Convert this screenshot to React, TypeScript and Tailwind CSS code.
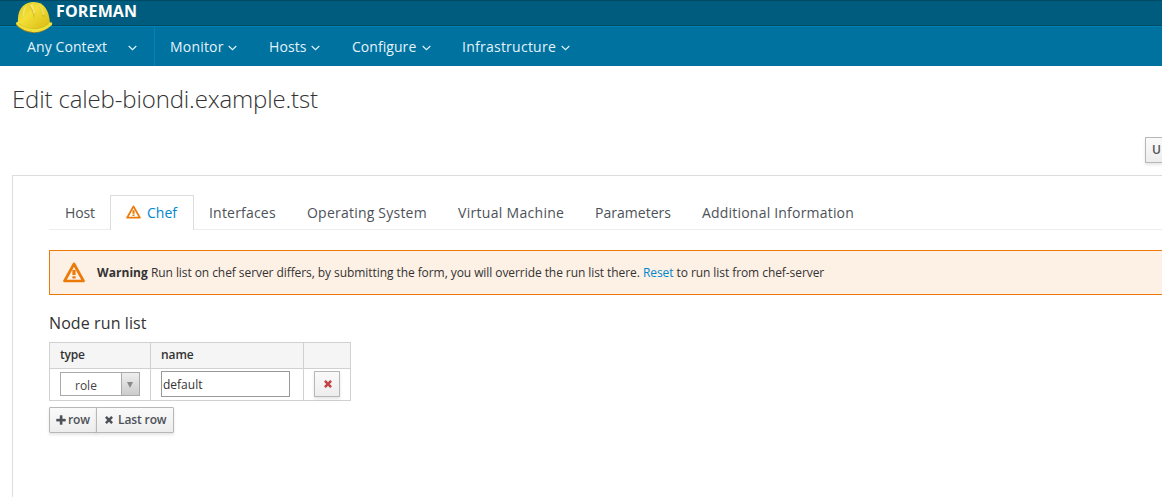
import React from "react";

function AngleDown() {
  return (
    <svg className="mt-[3px] block h-[6px] w-[10px]" viewBox="0 0 10 6" fill="none" stroke="#e3f3fa" strokeWidth="1.15">
      <path d="M.7 1 L4.5 4.7 L8.3 1" />
    </svg>
  );
}

function Warning({ className }: { className: string }) {
  return (
    <svg className={className} viewBox="0 0 22 21" fill="none">
      <path d="M11 2 L20.5 19 H1.5 Z" stroke="#ec7a08" strokeWidth="2.7" strokeLinejoin="round" />
      <path d="M9.4 8h3.2v5H9.4zM9.4 14.3h3.2v2.2H9.4z" fill="#ec7a08" />
    </svg>
  );
}

function Cross({ className }: { className: string }) {
  return (
    <svg className={className} viewBox="0 0 9 9" fill="none" stroke="currentColor" strokeWidth="2.9">
      <path d="M1 1 L8 8 M8 1 L1 8" />
    </svg>
  );
}

function Helmet() {
  return (
    <svg className="absolute left-[15px] top-[1px] h-[33px] w-[38px]" viewBox="0 0 38 33">
      <defs>
        <linearGradient id="dome" x1="0" y1="0" x2="1" y2="1">
          <stop offset="0" stopColor="#d9c426" />
          <stop offset=".4" stopColor="#f3df37" />
          <stop offset="1" stopColor="#d5b710" />
        </linearGradient>
      </defs>
      <path d="M1 24 Q2 22 3 22 L34 22 Q38 21 36.5 24 Q29 32 19 32 Q7 31 1 24Z" fill="#9d8422" />
      <path d="M3 22 C2 10 7 2 17 1 C29 0 34 9 35 22 C30 27 25 29 18 29 C11 29 6 27 3 22Z" fill="url(#dome)" />
      <path d="M1 23 Q1 20 4 21 Q9 26 19 27.5 Q28 28 34 22 Q38 20 37 24 Q29 31 19 31.2 Q7 30 1 23Z" fill="#efe03c" />
      <path d="M4 22.5 Q10 27.5 19 27.5 Q28 27.5 34 22.5" fill="none" stroke="#cdb21c" strokeWidth=".6" />
      <path d="M14 5 Q16 3 18 3.5 L20 11 Q20 16 18.5 17 Q18 10 14 5Z" fill="#d6bd24" />
      <path d="M14.5 4 L18 3 L20 11 L19 14 Q18 8 14.5 4Z" fill="#f4e670" />
      <path d="M23 4 Q27 6 29.5 15 Q29 17 27.5 15 Q26 8 23 4Z" fill="#d2b81f" />
      <path d="M23 3.5 Q27 6 29.5 13 L28 14.5 Q26 8 23 3.5Z" fill="#f0e063" />
      <path d="M8 10 Q9 6 12 4 Q10 9 9 15 Q7 15 8 10Z" fill="#f2e35f" />
    </svg>
  );
}

const menu = [
  { label: "Monitor", box: "w-[99px]", text: "w-[58px] tracking-[0.2px]" },
  { label: "Hosts", box: "w-[83px]", text: "w-[42px] tracking-[0.1px]" },
  { label: "Configure", box: "w-[110px]", text: "w-[70px] tracking-[0.05px]" },
  { label: "Infrastructure", box: "w-[120px]", text: "w-[99px] tracking-[0.25px]" },
];

const tabs = [
  { label: "Interfaces", box: "w-[98px] tracking-[0.2px]" },
  { label: "Operating System", box: "w-[151px] tracking-[0.22px]" },
  { label: "Virtual Machine", box: "w-[137px] tracking-[0.3px]" },
  { label: "Parameters", box: "w-[107px] tracking-[0.02px]" },
  { label: "Additional Information", box: "w-[184px] tracking-[0.2px]" },
];

const button =
  "flex items-center border border-[#b7b7b7] bg-gradient-to-b from-[#fafafa] to-[#ededed] text-[12px] font-semibold text-[#4d5258] shadow-[0_2px_3px_rgba(3,3,3,0.1)]";

export default function App() {
  return (
    <div className="h-[497px] w-full overflow-hidden whitespace-nowrap bg-white font-['Open_Sans',sans-serif] text-[12px] text-[#333]">
      <header className="relative h-[66px] text-white">
        <div className="flex h-[26px] items-center border-y border-[#004a66] bg-[#005c7f] pb-[4px] pl-[56px] text-[16px] font-bold leading-[20px] tracking-[0.15px]">
          FOREMAN
        </div>
        <nav className="flex h-[40px] items-center border-t border-[#0083b5] bg-[#0072a0] text-[14px] text-[#e3f3fa]">
          <div className="flex h-full w-[155px] items-center border-r border-[#0083b5] pb-px pl-[27px]">
            <span className="w-[101px] tracking-[0.1px]">Any Context</span>
            <AngleDown />
          </div>
          <div className="flex items-center pb-px pl-[15px]">
            {menu.map((m) => (
              <div key={m.label} className={`flex items-center ${m.box}`}>
                <span className={m.text}>{m.label}</span>
                <AngleDown />
              </div>
            ))}
          </div>
        </nav>
        <Helmet />
      </header>

      <h1 className="ml-[12px] mt-[17px] h-[32px] text-[24px] font-light leading-[32px] tracking-[-0.15px]">Edit caleb-biondi.example.tst</h1>
      <div className="mt-[22px] flex justify-end">
        <button className={`${button} h-[26px] w-[17px] rounded-l-[1px] border-r-0 pl-[6px]`}>U</button>
      </div>

      <main className="ml-[12px] mt-[12px] h-[330px] border-l border-t border-[#ddd] pl-[36px] pt-[19px]">
        <div className="flex h-[35px] text-[14px] leading-[35px] text-[#4d5258]">
          <div className="w-[61px] border-b border-[#ededed] pl-[16px] tracking-[-0.1px]">Host</div>
          <div className="flex w-[84px] items-center border-x border-t border-[#ddd] pb-[2px] pl-[15px] text-[#0088ce]">
            <Warning className="mr-[6px] h-[14px] w-[15px]" />
            <span className="leading-[33px]">Chef</span>
          </div>
          <div className="flex grow border-b border-[#ededed] pl-[15px]">
            {tabs.map((t) => (
              <div key={t.label} className={t.box}>{t.label}</div>
            ))}
          </div>
        </div>

        <div className="mt-[20px] flex h-[45px] items-center rounded-l-[1px] border-y border-l border-[#ec7a08] bg-[#fdf0e5] pl-[13px]">
          <Warning className="mb-px mr-[12px] h-[21px] w-[22px]" />
          <p className="tracking-[-0.071px]">
            <strong className="font-bold tracking-[0.05px]">Warning</strong> Run list on chef server differs, by submitting the form, you will override the run list there.{" "}
            <a className="text-[#0088ce]">Reset</a> to run list from chef-server
          </p>
        </div>

        <h2 className="mt-[17px] h-[22px] text-[16px] leading-[22px] tracking-[0.1px]">Node run list</h2>
        <div className="mt-[8px] grid h-[59px] w-[302px] grid-cols-[101px_153px_46px] grid-rows-[26px_31px] border border-[#d1d1d1]">
          <div className="border-b border-r border-[#d1d1d1] bg-[#f5f5f5] pl-[10px] font-semibold leading-[24px] tracking-[-0.2px]">type</div>
          <div className="border-b border-r border-[#d1d1d1] bg-[#f5f5f5] pl-[10px] font-semibold leading-[24px] tracking-[-0.1px]">name</div>
          <div className="border-b border-[#d1d1d1] bg-[#f5f5f5]" />
          <div className="border-r border-[#d1d1d1] pl-[10px] pt-[3px]">
            <div className="flex h-[24px] w-[80px] border border-[#aaa]">
              <span className="w-[60px] pl-[14px] leading-[25px] text-[#444]">role</span>
              <span className="flex grow items-center justify-center border-l border-[#aaa] bg-gradient-to-b from-[#eee] to-[#ccc] pr-px pt-[2px]">
                <svg className="h-[6px] w-[6px]" viewBox="0 0 6 6"><path d="M0 0H6L3 6Z" fill="#888" /></svg>
              </span>
            </div>
          </div>
          <div className="border-r border-[#d1d1d1] pl-[10px] pt-[2px]">
            <div className="h-[26px] w-[129px] border border-[#999] pl-[1px] leading-[25px]">default</div>
          </div>
          <div className="pl-[10px] pt-[2px]">
            <button className={`${button} h-[26px] w-[26px] justify-center pl-[2px]`}>
              <Cross className="h-[8px] w-[8px] text-[#c14542]" />
            </button>
          </div>
        </div>
        <div className="mt-[6px] flex">
          <button className={`${button} h-[26px] w-[48px] rounded-l-[1px] pl-[6px] tracking-[-0.1px]`}>
            <svg className="mr-[2px] h-[10px] w-[10px]" viewBox="0 0 10 10"><path d="M4 .5h2.2V4H9.5v2.2H6.2v3.3H4V6.2H.5V4H4Z" fill="currentColor" stroke="currentColor" strokeWidth=".4" /></svg>
            row
          </button>
          <button className={`${button} -ml-px h-[26px] w-[78px] rounded-r-[1px] pl-[8px] tracking-[-0.12px]`}>
            <Cross className="mr-[5px] h-[8px] w-[8px]" />
            Last row
          </button>
        </div>
      </main>
    </div>
  );
}
